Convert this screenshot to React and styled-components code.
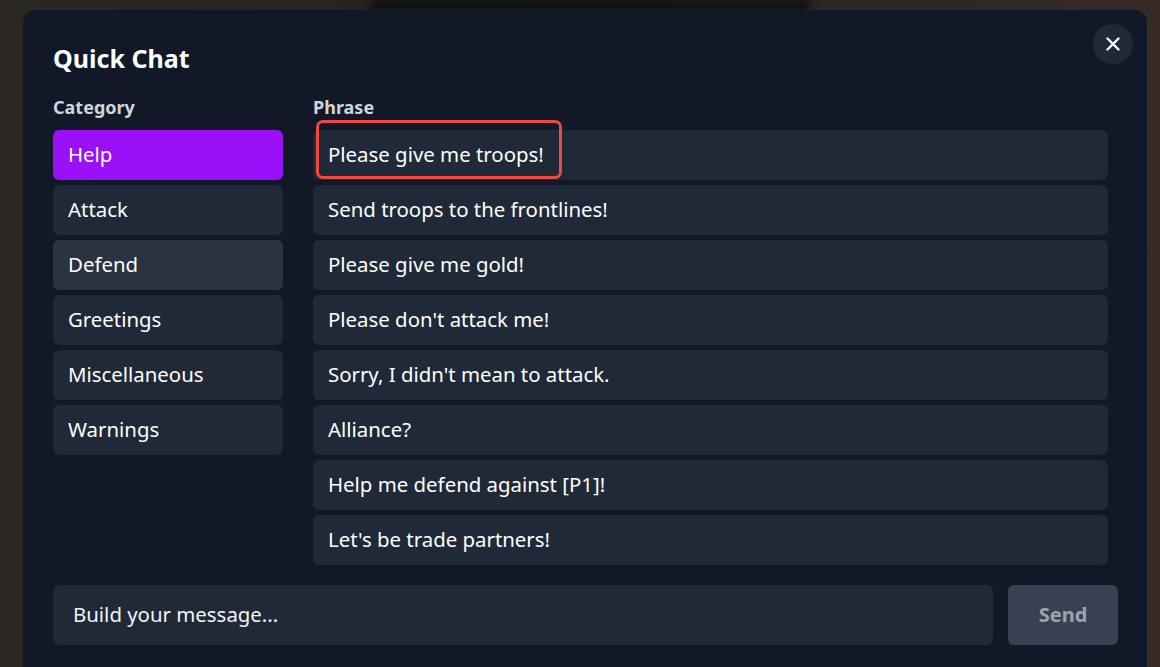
import React from "react";
import styled, { createGlobalStyle } from "styled-components";

const Global = createGlobalStyle`
  html, body { margin: 0; padding: 0; }
  body {
    font-family: "Noto Sans", "Open Sans", sans-serif;
    background: #2a2621;
    overflow: hidden;
  }
`;

const Backdrop = styled.div`
  width: 1160px;
  height: 667px;
  box-sizing: border-box;
  padding: 10px 13px 0 23px;
  background: linear-gradient(90deg, #2b2721 0%, #26231f 40%, #2c2823 80%, #372a27 100%);
  position: relative;
  overflow: hidden;
`;

const TopShade = styled.div`
  position: absolute;
  top: 0;
  left: 370px;
  width: 440px;
  height: 12px;
  background: #0d0f13;
  filter: blur(4px);
`;

const Modal = styled.div`
  position: relative;
  width: 1124px;
  height: 700px;
  box-sizing: border-box;
  background: #111827;
  border-radius: 12px;
  padding: 28px 29px 0 30px;
  color: #ffffff;
  display: flex;
  flex-direction: column;
`;

const Title = styled.h2`
  margin: 0;
  font-size: 25px;
  font-weight: 700;
  line-height: 40px;
`;

const CloseButton = styled.button`
  position: absolute;
  top: 14px;
  right: 14px;
  width: 40px;
  height: 40px;
  border-radius: 50%;
  border: none;
  background: #1f2937;
  color: #fff;
  display: flex;
  align-items: center;
  justify-content: center;
  padding: 0;
`;

const Columns = styled.div`
  display: flex;
  gap: 30px;
  margin-top: 16px;
  padding-right: 10px;
`;

const Column = styled.div`
  display: flex;
  flex-direction: column;
  width: ${(p) => p.$width};
  flex: ${(p) => (p.$grow ? 1 : "none")};
`;

const Label = styled.div`
  font-size: 18px;
  font-weight: 700;
  color: #d1d5db;
  line-height: 26px;
  margin-bottom: 10px;
`;

const List = styled.div`
  display: flex;
  flex-direction: column;
  gap: 5px;
`;

const Item = styled.button`
  position: relative;
  height: 50px;
  border: none;
  border-radius: 6px;
  padding: 0 15px 2px;
  text-align: left;
  font-family: inherit;
  font-size: 20.4px;
  color: #ffffff;
  background: ${(p) =>
    p.$active ? "#9a10f9" : p.$hover ? "#293341" : "#1f2937"};
`;

const Highlight = styled.span`
  position: absolute;
  left: 3px;
  top: -10px;
  width: 246px;
  height: 59px;
  box-sizing: border-box;
  border: 3px solid #f04844;
  border-radius: 7px;
  pointer-events: none;
`;

const Composer = styled.div`
  display: flex;
  gap: 15px;
  margin-top: 20px;
`;

const Input = styled.div`
  flex: 1;
  height: 60px;
  box-sizing: border-box;
  background: #1f2937;
  border-radius: 6px;
  display: flex;
  align-items: center;
  padding: 0 20px 2px;
  font-size: 20.4px;
  color: #f3f4f6;
`;

const SendButton = styled.button`
  width: 110px;
  height: 60px;
  border: none;
  border-radius: 6px;
  padding-bottom: 2px;
  background: #374151;
  color: #9ca3af;
  font-family: inherit;
  font-size: 20px;
  font-weight: 700;
`;

const categories = ["Help", "Attack", "Defend", "Greetings", "Miscellaneous", "Warnings"];
const phrases = [
  "Please give me troops!",
  "Send troops to the frontlines!",
  "Please give me gold!",
  "Please don't attack me!",
  "Sorry, I didn't mean to attack.",
  "Alliance?",
  "Help me defend against [P1]!",
  "Let's be trade partners!",
];

export default function App() {
  return (
    <>
      <Global />
      <Backdrop>
        <TopShade />
        <Modal>
          <Title>Quick Chat</Title>
          <CloseButton aria-label="Close">
            <svg width="20" height="20" viewBox="0 0 20 20" fill="none" stroke="#fff" strokeWidth="2.4" strokeLinecap="round">
              <path d="M4.5 4.5 L15.5 15.5 M15.5 4.5 L4.5 15.5" />
            </svg>
          </CloseButton>
          <Columns>
            <Column $width="230px">
              <Label>Category</Label>
              <List>
                {categories.map((c, i) => (
                  <Item key={c} $active={i === 0} $hover={c === "Defend"}>
                    {c}
                  </Item>
                ))}
              </List>
            </Column>
            <Column $grow>
              <Label>Phrase</Label>
              <List>
                {phrases.map((p, i) => (
                  <Item key={p}>
                    {p}
                    {i === 0 && <Highlight />}
                  </Item>
                ))}
              </List>
            </Column>
          </Columns>
          <Composer>
            <Input>Build your message...</Input>
            <SendButton>Send</SendButton>
          </Composer>
        </Modal>
      </Backdrop>
    </>
  );
}
